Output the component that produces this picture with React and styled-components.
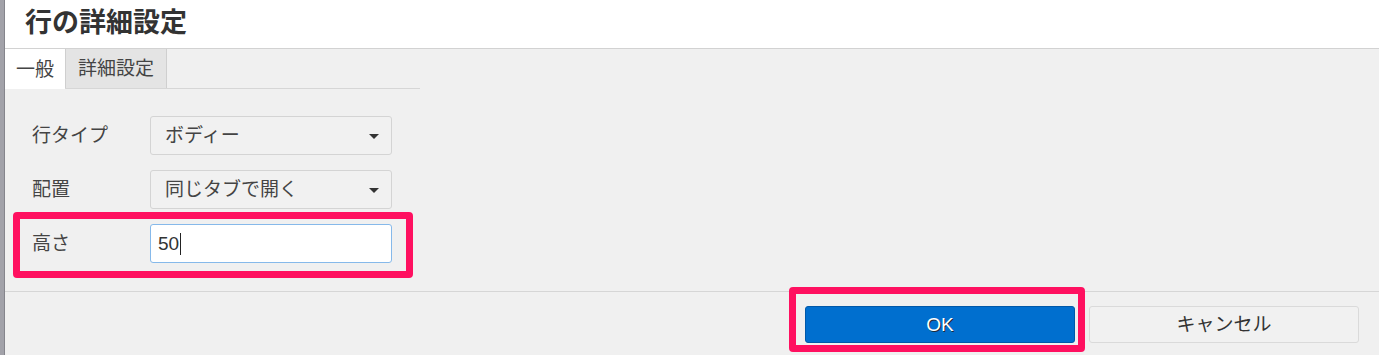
import React from "react";
import styled, { createGlobalStyle } from "styled-components";

const GlobalStyle = createGlobalStyle`
  html, body {
    margin: 0;
    padding: 0;
    background: #f0f0f0;
  }
  body {
    font-family: "Liberation Sans", "Noto Sans CJK JP", sans-serif;
    color: #333;
  }
`;

const Screen = styled.div`
  display: flex;
  width: 1379px;
  height: 355px;
  overflow: hidden;
`;

const PageEdge = styled.div`
  width: 4px;
  flex: none;
  background: #a2a2a9;
  border-right: 1px solid #85858c;
`;

const Dialog = styled.div`
  flex: 1;
  display: flex;
  flex-direction: column;
  background: #f0f0f0;
`;

const Header = styled.div`
  height: 48px;
  flex: none;
  display: flex;
  align-items: center;
  padding-left: 20px;
  background: #fff;
  border-bottom: 1px solid #d2d2d2;
`;

const Title = styled.h1`
  margin: 0;
  font-size: 27px;
  font-weight: bold;
  color: #333;
  line-height: 1;
  padding-bottom: 2px;
`;

const TabBar = styled.div`
  display: flex;
  width: 415px;
  height: 39px;
  flex: none;
  border-bottom: 1px solid #d6d6d6;
`;

const Tab = styled.div`
  display: flex;
  align-items: center;
  justify-content: center;
  padding: 0 11px;
  font-size: 19px;
  color: #444;
  line-height: 1;
  background: ${(p) => (p.$active ? "#fff" : "#e4e4e4")};
  border-left: ${(p) => (p.$active ? "none" : "1px solid #cfcfcf")};
  border-right: ${(p) => (p.$active ? "none" : "1px solid #cfcfcf")};
  margin-bottom: ${(p) => (p.$active ? "-1px" : "0")};
  width: ${(p) => p.$width}px;
  box-sizing: border-box;
`;

const Body = styled.div`
  flex: 1;
  display: flex;
  flex-direction: column;
  gap: 15px;
  padding: 27px 0 0 27px;
`;

const Row = styled.div`
  position: relative;
  display: flex;
  align-items: center;
  width: 360px;
  height: 39px;

  ${(p) =>
    p.$highlight &&
    `
    &::after {
      content: "";
      position: absolute;
      top: -12px;
      bottom: -15px;
      left: -19px;
      right: -21px;
      border: 7px solid #ff1060;
      border-radius: 4px;
      pointer-events: none;
    }
  `}
`;

const Label = styled.div`
  width: 118px;
  font-size: 19px;
  color: #444;
  line-height: 1;
`;

const Select = styled.div`
  flex: 1;
  height: 100%;
  box-sizing: border-box;
  display: flex;
  align-items: center;
  justify-content: space-between;
  padding: 0 12px 0 14px;
  background: #f1f1f1;
  border: 1px solid #d4d4d4;
  border-radius: 3px;
  font-size: 19px;
  color: #444;
  line-height: 1;
`;

const Arrow = styled.span`
  width: 0;
  height: 0;
  border-left: 5px solid transparent;
  border-right: 5px solid transparent;
  border-top: 5px solid #333;
  margin-top: 2px;
`;

const TextBox = styled.div`
  flex: 1;
  height: 100%;
  box-sizing: border-box;
  display: flex;
  align-items: center;
  padding: 0 7px;
  background: #fff;
  border: 1px solid #86b9ea;
  border-radius: 3px;
  font-size: 19px;
  color: #333;
  line-height: 1;
`;

const Caret = styled.span`
  display: inline-block;
  width: 1px;
  height: 22px;
  background: #222;
  margin-left: 1px;
`;

const Footer = styled.div`
  height: 64px;
  flex: none;
  display: flex;
  justify-content: flex-end;
  gap: 14px;
  padding: 14px 20px 0 0;
  box-sizing: border-box;
  border-top: 1px solid #d6d6d6;
`;

const Button = styled.button`
  position: relative;
  width: 270px;
  height: 37px;
  border-radius: 3px;
  font-family: "Liberation Sans", "Noto Sans CJK JP", sans-serif;
  font-size: 19px;
  line-height: 1;
  cursor: pointer;
  background: ${(p) => (p.$primary ? "#006fcf" : "#f1f1f1")};
  border: 1px solid ${(p) => (p.$primary ? "#0059a9" : "#dadada")};
  color: ${(p) => (p.$primary ? "#fff" : "#333")};
  text-shadow: ${(p) => (p.$primary ? "1px 1px 0 #1d2a3a" : "none")};

  ${(p) =>
    p.$highlight &&
    `
    &::after {
      content: "";
      position: absolute;
      top: -20px;
      bottom: -10px;
      left: -17px;
      right: -11px;
      border: 7px solid #ff1060;
      border-radius: 4px;
      pointer-events: none;
    }
  `}
`;

export default function App() {
  return (
    <>
      <GlobalStyle />
      <Screen>
        <PageEdge />
        <Dialog>
          <Header>
            <Title>行の詳細設定</Title>
          </Header>
          <TabBar>
            <Tab $active $width={60}>一般</Tab>
            <Tab $width={102}>詳細設定</Tab>
          </TabBar>
          <Body>
            <Row>
              <Label>行タイプ</Label>
              <Select>
                ボディー
                <Arrow />
              </Select>
            </Row>
            <Row>
              <Label>配置</Label>
              <Select>
                同じタブで開く
                <Arrow />
              </Select>
            </Row>
            <Row $highlight>
              <Label>高さ</Label>
              <TextBox>
                50
                <Caret />
              </TextBox>
            </Row>
          </Body>
          <Footer>
            <Button $primary $highlight>OK</Button>
            <Button>キャンセル</Button>
          </Footer>
        </Dialog>
      </Screen>
    </>
  );
}
